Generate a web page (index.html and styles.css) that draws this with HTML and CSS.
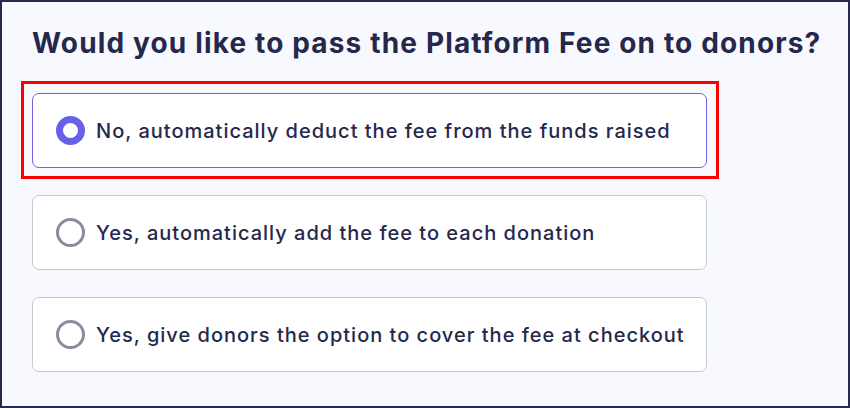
FILE: index.html
```html
<!DOCTYPE html>
<html lang="en">
<head>
    <meta charset="UTF-8">
    <title>Platform Fee</title>
    <link rel="stylesheet" href="styles.css">
</head>
<body>
    <div class="panel">
        <h2 class="title">Would you like to pass the Platform Fee on to donors?</h2>
        <div class="options">
            <label class="option checked">
                <span class="radio"></span>
                <span class="label">No, automatically deduct the fee from the funds raised</span>
            </label>
            <label class="option">
                <span class="radio"></span>
                <span class="label">Yes, automatically add the fee to each donation</span>
            </label>
            <label class="option">
                <span class="radio"></span>
                <span class="label">Yes, give donors the option to cover the fee at checkout</span>
            </label>
        </div>
    </div>
</body>
</html>
```

FILE: styles.css
```css
* {margin: 0;padding: 0;box-sizing: border-box;}

html, body {
    width: 850px;
    height: 408px;
}
body {
    font-family: Inter, "Noto Sans", sans-serif;
    color: #25284b;
    background-color: #f8f9fe;
}
.panel {
    width: 850px;
    height: 408px;
    border: 2px solid #262a4f;
    padding: 24px 20px 0 30px;
}
.title {
    font-size: 28px;
    font-weight: 700;
    line-height: 34px;
    letter-spacing: 1.15px;
    white-space: nowrap;
}
.options {
    display: flex;
    flex-direction: column;
    gap: 27px;
    margin-top: 33px;
    width: 675px;
}
.option {
    position: relative;
    display: flex;
    align-items: center;
    gap: 11px;
    height: 75px;
    padding: 0 23px;
    background-color: #fff;
    border: 1px solid #c4c8d2;
    border-radius: 7px;
}
.option.checked {
    border-color: #6b62e4;
}
/* highlight frame round the chosen answer */
.option.checked::after {
    content: "";
    position: absolute;
    top: -13px;
    left: -12px;
    right: -13px;
    bottom: -12px;
    border: 3px solid #f00;
}
.radio {
    flex: none;
    width: 29px;
    height: 29px;
    border-radius: 50%;
    border: 3px solid #878d9b;
    background-color: #fff;
}
.option.checked .radio {
    border: 7px solid #6861e8;
}
.label {
    font-size: 20px;
    font-weight: 500;
    letter-spacing: 1px;
    white-space: nowrap;
}
```
